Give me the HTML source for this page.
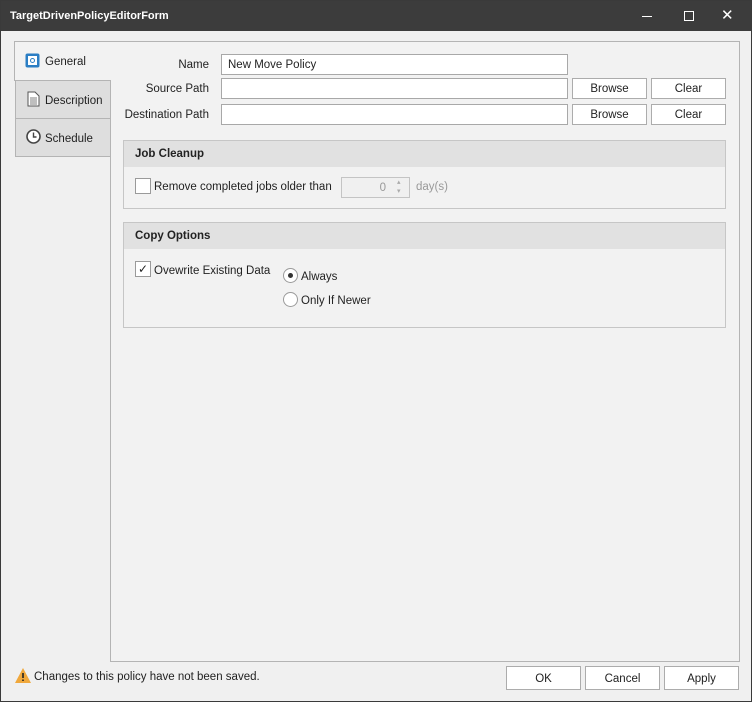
<!DOCTYPE html>
<html><head><style>
*{box-sizing:border-box;margin:0;padding:0}
body{width:752px;height:702px;background:#f0f0f0;font-family:"Liberation Sans",sans-serif;font-size:11.5px;color:#222;position:relative;overflow:hidden}
.brd{position:absolute;left:0;top:0;width:752px;height:702px;border:1px solid #3a3a3a;z-index:9;pointer-events:none}
.title{position:absolute;left:0;top:0;width:752px;height:31px;background:#3c3c3c;color:#fff;font-weight:bold;font-size:11px}
.a{position:absolute}
.inp{position:absolute;background:#fff;border:1px solid #a8a8a8;height:21px;padding:4px 6px 0}
.btn{position:absolute;background:#fff;border:1px solid #acacac;height:21px;text-align:center;line-height:21px}
.lbl{position:absolute;text-align:right;width:120px}
.grp{position:absolute;border:1px solid #c6c6c6;background:#f2f2f2}
.gh{height:26px;background:#e1e1e1;font-weight:bold;padding:7px 11px 0}
.tab{position:absolute;left:15px;width:96px;height:39px;background:#dedede;border:1px solid #b4b4b4;padding:12px 0 0 29px}
.cb{position:absolute;width:16px;height:16px;border:1px solid #9a9a9a;background:#fff}
.rb{position:absolute;width:15px;height:15px;border:1px solid #9a9a9a;border-radius:50%;background:#fff}
</style></head><body>
<div class="brd"></div>
<div class="title"><span class="a" style="left:10px;top:10px">TargetDrivenPolicyEditorForm</span>
<span class="a" style="left:642px;top:16px;width:10px;height:1px;background:#fff"></span>
<span class="a" style="left:684px;top:11px;width:10px;height:10px;border:1px solid #fff"></span>
<span class="a" style="left:721px;top:6px;font-size:15px;font-weight:normal">✕</span>
</div>
<div class="a" style="left:110px;top:41px;width:630px;height:621px;border:1px solid #b4b4b4;background:#f2f2f2"></div>
<div class="a" style="left:14px;top:41px;width:97px;height:40px;border:1px solid #b4b4b4;border-right:none;border-bottom:none;background:#f2f2f2;padding:14px 0 0 30px">General</div>
<svg class="a" style="left:25px;top:53px" width="15" height="15"><rect x="0.5" y="0.5" width="14" height="14" rx="2" fill="#2b7ec4"/><rect x="3" y="3" width="9" height="9" fill="#fff"/><circle cx="7.5" cy="7.5" r="2" fill="none" stroke="#2b7ec4"/></svg>
<div class="tab" style="top:80px;padding-top:14px">Description</div>
<svg class="a" style="left:27px;top:91px" width="13" height="16"><path d="M1 1h7l4 4v10H1z" fill="#fff" stroke="#555"/><path d="M3 7h7M3 9h7M3 11h7M3 13h7" stroke="#555" stroke-width="0.8"/></svg>
<div class="tab" style="top:118px;padding-top:14px">Schedule</div>
<svg class="a" style="left:26px;top:129px" width="15" height="15"><circle cx="7.5" cy="7.5" r="6.5" fill="#fff" stroke="#444" stroke-width="1.6"/><path d="M7.5 3.5v4.5h3" fill="none" stroke="#444" stroke-width="1.4"/></svg>
<div class="lbl" style="left:89px;top:59px">Name</div>
<div class="inp" style="left:221px;top:54px;width:347px">New Move Policy</div>
<div class="lbl" style="left:89px;top:83px">Source Path</div>
<div class="inp" style="left:221px;top:78px;width:347px"></div>
<div class="btn" style="left:572px;top:78px;width:75px">Browse</div>
<div class="btn" style="left:651px;top:78px;width:75px">Clear</div>
<div class="lbl" style="left:89px;top:109px">Destination Path</div>
<div class="inp" style="left:221px;top:104px;width:347px"></div>
<div class="btn" style="left:572px;top:104px;width:75px">Browse</div>
<div class="btn" style="left:651px;top:104px;width:75px">Clear</div>
<div class="grp" style="left:123px;top:140px;width:603px;height:69px"><div class="gh">Job Cleanup</div></div>
<div class="cb" style="left:135px;top:178px"></div>
<div class="a" style="left:154px;top:181px">Remove completed jobs older than</div>
<div class="a" style="left:341px;top:177px;width:69px;height:21px;border:1px solid #c4c4c4;background:#f0f0f0;color:#999;text-align:right;padding:4px 23px 0 0">0</div>
<div class="a" style="left:397px;top:178px;font-size:7px;color:#aaa;line-height:9px">▴<br>▾</div>
<div class="a" style="left:416px;top:181px;color:#999">day(s)</div>
<div class="grp" style="left:123px;top:222px;width:603px;height:106px"><div class="gh">Copy Options</div></div>
<div class="cb" style="left:135px;top:261px;font-size:12px;line-height:14px;text-align:center">✓</div>
<div class="a" style="left:154px;top:265px">Ovewrite Existing Data</div>
<div class="rb" style="left:283px;top:268px"><div style="position:absolute;left:4px;top:4px;width:5px;height:5px;border-radius:50%;background:#333"></div></div>
<div class="a" style="left:301px;top:271px">Always</div>
<div class="rb" style="left:283px;top:292px"></div>
<div class="a" style="left:301px;top:295px">Only If Newer</div>
<svg class="a" style="left:14px;top:667px" width="18" height="17"><path d="M9 1L17 16H1z" fill="#f0a83c"/><path d="M9 6v5M9 12.5v1.5" stroke="#222" stroke-width="1.6"/></svg>
<div class="a" style="left:34px;top:671px">Changes to this policy have not been saved.</div>
<div class="btn" style="left:506px;top:666px;width:75px;height:24px;line-height:24px">OK</div>
<div class="btn" style="left:585px;top:666px;width:75px;height:24px;line-height:24px">Cancel</div>
<div class="btn" style="left:664px;top:666px;width:75px;height:24px;line-height:24px">Apply</div>
</body></html>
